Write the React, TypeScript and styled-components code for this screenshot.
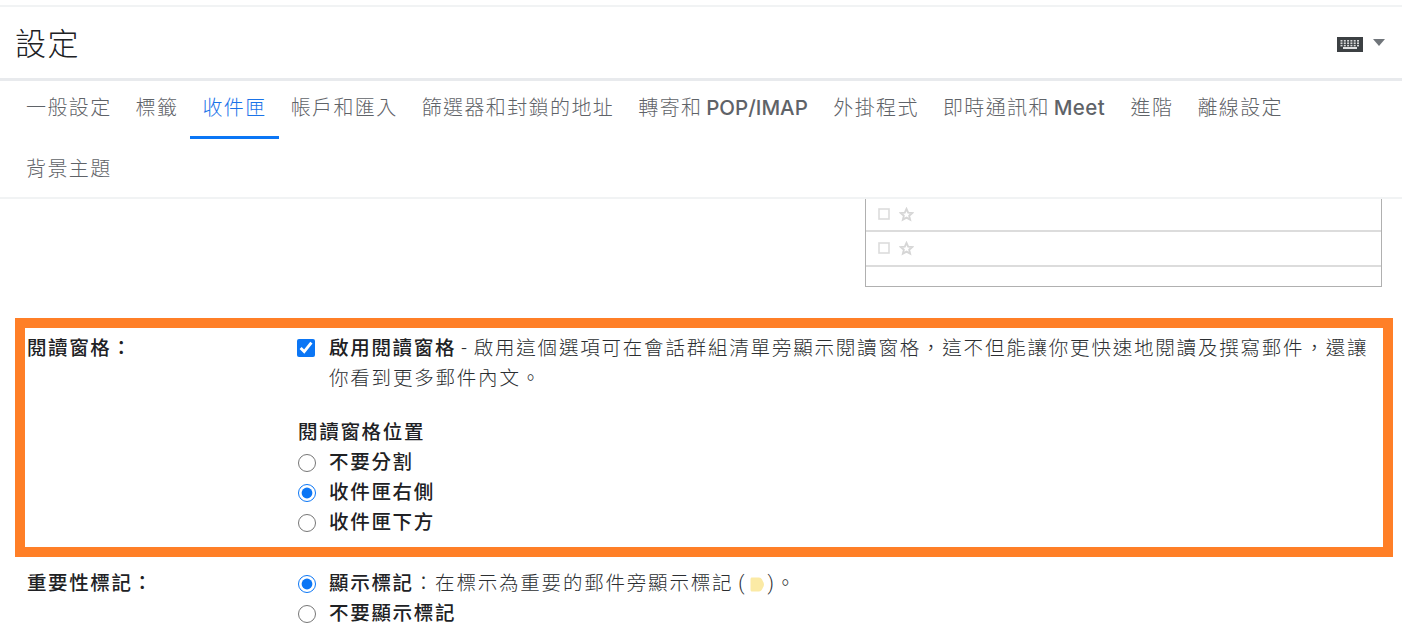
import React from "react";
import styled, { createGlobalStyle } from "styled-components";

const Global = createGlobalStyle`
  html, body { margin: 0; padding: 0; background: #fff; overflow: hidden; }
  body { font-family: "Roboto", "Noto Sans CJK TC", "Noto Sans", sans-serif; color: #202124; }
`;
const Page = styled.div`width: 1402px; height: 640px; overflow: hidden; display: flex; flex-direction: column;`;
const Header = styled.header`
  margin-top: 5px; height: 76px; box-sizing: border-box; border-top: 2px solid #f1f3f4; border-bottom: 3px solid #e8eaed;
  display: flex; align-items: center; justify-content: space-between; padding: 4px 17px 0 15px; flex: none;
`;
const Title = styled.h1`margin: 0; font-size: 31px; font-weight: 300; color: #202124; line-height: 40px; letter-spacing: 1.6px;`;
const Tools = styled.div`display: flex; align-items: center; gap: 10px;`;
const Tabs = styled.nav`
  flex: none; height: 118px; box-sizing: border-box; border-bottom: 2px solid #f1f3f4; padding: 0 100px 0 14px;
  display: flex; flex-wrap: wrap; align-content: flex-start; row-gap: 3px;
`;
const Tab = styled.div<{ $active?: boolean }>`
  height: 58px; box-sizing: border-box; padding: 12px 12px 0 12px; line-height: 30px; font-size: 20px; letter-spacing: 1.4px; font-weight: 300;
  white-space: nowrap; color: ${p => (p.$active ? "#1a73e8" : "#5f6368")};
  border-bottom: 3px solid ${p => (p.$active ? "#0b76f5" : "transparent")};
`;
const Latin = styled.b<{ $spacing?: number }>`
  font-family: "Inter", sans-serif; font-size: 20.5px; font-weight: 500; color: #5f6368; margin: 0 1.5px 0 -2.5px;
  letter-spacing: ${p => p.$spacing ?? 0}px;
`;
const Content = styled.main`flex: 1; display: flex; flex-direction: column;`;
const Preview = styled.div`
  margin-left: 865px; width: 517px; height: 88px; box-sizing: border-box; border: 1px solid #b0b0b0; border-top: 0; flex: none;
  display: flex; flex-direction: column;
`;
const PreviewRow = styled.div`
  height: 30px; border-bottom: 2px solid #dcdcdc; display: flex; align-items: center; gap: 9px; padding: 0 0 1px 12px; flex: none;
  & + & { height: 32px; padding-bottom: 1px; }
`;
const Highlight = styled.section`
  margin: 31px 0 0 15px; width: 1378px; height: 239px; box-sizing: border-box; border: 10px solid #ff7f27; flex: none;
  display: grid; grid-template-columns: 271px 1fr; padding: 6px 0 0 2px;
`;
const Plain = styled.section`
  display: grid; grid-template-columns: 271px 1fr; margin: 12px 0 0 27px; width: 1340px;
`;
const Label = styled.div`font-size: 19.5px; font-weight: 500; line-height: 30px; letter-spacing: 1.6px; color: #202124;`;
const Body = styled.div`font-size: 19.5px; line-height: 30px; letter-spacing: 1.8px; word-spacing: -1.5px; color: #2b2e31; font-weight: 300;`;
const Row = styled.label`display: flex; align-items: flex-start; gap: 13px; height: 30px;`;
const TextRow = styled.div`display: flex; align-items: flex-start; gap: 14px;`;
const Strong = styled.span`font-weight: 500; color: #202124; letter-spacing: 1.7px;`;
const Heading = styled.div`font-weight: 500; color: #202124; margin-top: 24px; height: 30px; letter-spacing: 1.7px;`;
const Check = styled.input`width: 18px; height: 18px; margin: 5px 0 0 -1px; accent-color: #0b76f5; flex: none;`;
const Radio = styled.input`width: 18px; height: 18px; margin: 6px 0 0; accent-color: #0b76f5; flex: none;`;
const Marker = styled.svg`vertical-align: -2px; margin: 0 3px 0 4px;`;
const CaretIcon = styled.svg`margin-top: -4px;`;

const Keyboard = () => (
  <svg width="26" height="15" viewBox="0 0 26 15">
    <rect width="26" height="15" fill="#3c4043" />
    {[0, 1, 2].flatMap(r => [0, 1, 2, 3, 4, 5].map(c => (
      <rect key={`${r}${c}`} x={3.5 + c * 3.3} y={3 + r * 2.4} width="2" height="1.6" fill="#d8d8d8" />
    )))}
    <rect x="6" y="10" width="14" height="2" fill="#e0e0e0" />
  </svg>
);
const Caret = () => (
  <CaretIcon width="12" height="7" viewBox="0 0 12 7">
    <path d="M0 0h12L6 7z" fill="#70757a" />
  </CaretIcon>
);
const Box = () => (
  <svg width="12" height="12" viewBox="0 0 12 12"><rect x="1" y="1" width="10" height="10" fill="none" stroke="#dcdcdc" strokeWidth="1.6" /></svg>
);
const Star = () => (
  <svg width="15" height="15" viewBox="0 0 24 24"><path d="M12 3l2.7 6 6.5.6-4.9 4.3 1.500 6.4L12 17l-5.8 3.3 1.5-6.4-4.9-4.3 6.5-.6z" fill="none" stroke="#d6d6d6" strokeWidth="3" /></svg>
);

export default function App() {
  return (
    <Page>
      <Global />
      <Header>
        <Title>設定</Title>
        <Tools><Keyboard /><Caret /></Tools>
      </Header>
      <Tabs>
        <Tab>一般設定</Tab>
        <Tab>標籤</Tab>
        <Tab $active>收件匣</Tab>
        <Tab>帳戶和匯入</Tab>
        <Tab>篩選器和封鎖的地址</Tab>
        <Tab>轉寄和 <Latin>POP/IMAP</Latin></Tab>
        <Tab>外掛程式</Tab>
        <Tab>即時通訊和 <Latin $spacing={0.4}>Meet</Latin></Tab>
        <Tab>進階</Tab>
        <Tab>離線設定</Tab>
        <Tab>背景主題</Tab>
      </Tabs>
      <Content>
        <Preview>
          <PreviewRow><Box /><Star /></PreviewRow>
          <PreviewRow><Box /><Star /></PreviewRow>
        </Preview>
        <Highlight>
          <Label>閱讀窗格：</Label>
          <Body>
            <TextRow>
              <Check type="checkbox" defaultChecked />
              <div><Strong>啟用閱讀窗格</Strong> - 啟用這個選項可在會話群組清單旁顯示閱讀窗格，這不但能讓你更快速地閱讀及撰寫郵件，還讓你看到更多郵件內文。</div>
            </TextRow>
            <Heading>閱讀窗格位置</Heading>
            <Row><Radio type="radio" name="pane" /><Strong>不要分割</Strong></Row>
            <Row><Radio type="radio" name="pane" defaultChecked /><Strong>收件匣右側</Strong></Row>
            <Row><Radio type="radio" name="pane" /><Strong>收件匣下方</Strong></Row>
          </Body>
        </Highlight>
        <Plain>
          <Label>重要性標記：</Label>
          <Body>
            <Row>
              <Radio type="radio" name="mark" defaultChecked />
              <span><Strong>顯示標記</Strong>：在標示為重要的郵件旁顯示標記 (<Marker width="14" height="15" viewBox="0 0 14 15"><path d="M2 .5h7c1.500 0 2.200.8 3 2l1.500 3c.6 1.400.6 2.600 0 4l-1.500 3c-.8 1.200-1.500 2-3 2H2c-1 0-1.500-.6-1.500-1.500v-11C.5 1.100 1 .5 2 .5z" fill="#fbeaa5" /></Marker>)。</span>
            </Row>
            <Row><Radio type="radio" name="mark" /><Strong>不要顯示標記</Strong></Row>
          </Body>
        </Plain>
      </Content>
    </Page>
  );
}
